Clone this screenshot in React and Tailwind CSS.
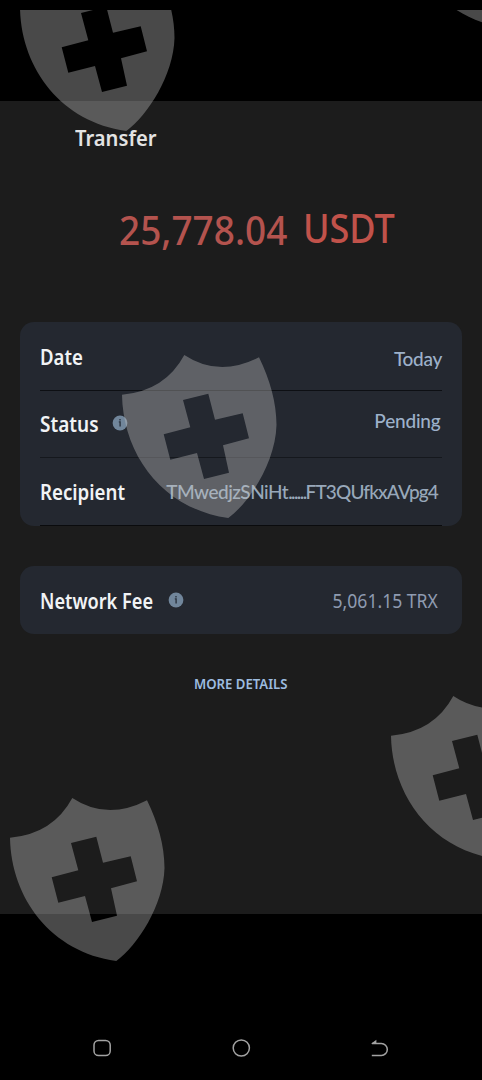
const SHIELD_BODY =
  "M10 57.7Q53 54 72.3 18Q107 41 147 20.3C158 43 164.5 66 164.5 88C163.5 125 138 165 116.3 181C51 172 11 118 10 57.7Z";
const SHIELD_CROSS =
  "M71 63L96.3 56.7L103 82.7L130.7 76.3L137 101.3L111 108.3L117 135.7L92 142L85 116L58.3 122.7L51.7 97.3L78.3 90.3Z";

function Shield({ className }) {
  return (
    <svg
      width="170"
      height="185"
      viewBox="0 0 170 185"
      className={`absolute ${className}`}
      fill="#bfbfbf"
      fillOpacity="0.38"
      fillRule="evenodd"
    >
      <path d={`${SHIELD_BODY}${SHIELD_CROSS}`} />
    </svg>
  );
}

function InfoIcon() {
  return (
    <svg width="16" height="16" viewBox="0 0 16 16" className="shrink-0">
      <circle cx="8" cy="8" r="7.4" fill="#71869b" />
      <path d="M6.8 6.9h1.3v4.6M8 4v1.5" stroke="#2b3440" strokeWidth="1.4" fill="none" />
    </svg>
  );
}

function Label({ children, className = "scale-x-[0.885]" }) {
  return (
    <span className={`origin-left whitespace-nowrap text-[21px] leading-7 font-semibold text-[#f1f3f5] ${className}`}>
      {children}
    </span>
  );
}

function Value({ children, className = "" }) {
  return (
    <span className={`ml-auto origin-right whitespace-nowrap leading-7 ${className}`}>
      {children}
    </span>
  );
}

export default function App() {
  return (
    <div className="relative h-[1080px] w-[482px] overflow-hidden bg-black font-['Noto_Sans',sans-serif]">
      <div className="h-[101px]" />

      <main className="flex h-[813px] flex-col bg-[#1c1c1c]">
        <h1 className="mt-[23px] ml-[75px] w-max origin-left scale-x-[0.96] text-[21px] leading-7 font-semibold text-[#e3e3e3]">
          Transfer
        </h1>

        <div className="mt-[50px] ml-[118.5px] flex h-14 text-[40px] leading-[56px] font-medium">
          <span className="w-[184px] origin-left scale-x-[0.925] whitespace-nowrap text-[#b4534e]">25,778.04</span>
          <span className="-mt-[2px] origin-left scale-x-[0.9] text-[#c1524a]">USDT</span>
        </div>

        <section className="mx-5 mt-16 h-[204px] rounded-[14px] bg-[#242830] px-5">
          <div className="flex h-[69px] border-b border-[#0d0f13] pt-[21px]">
            <Label>Date</Label>
            <Value className="mt-[2px] font-['Lato',sans-serif] text-[19px] font-medium tracking-[-0.3px] text-[#9db1ca]">
              Today
            </Value>
          </div>
          <div className="flex h-[67px] border-b border-[#15181d] pt-[19px]">
            <Label className="w-[72px] scale-x-[0.905]">Status</Label>
            <div className="mt-[5px]">
              <InfoIcon />
            </div>
            <Value className="-mt-[3px] mr-[1.5px] font-['Lato',sans-serif] text-[19px] font-medium tracking-[-0.2px] text-[#9db1ca]">
              Pending
            </Value>
          </div>
          <div className="flex h-[68px] border-b border-[#0a0b0d] pt-5">
            <Label className="scale-x-[0.89]">Recipient</Label>
            <Value className="mr-1 font-['Lato',sans-serif] text-[19px] font-medium text-[#98a8ba]">
              <span className="tracking-[-0.5px]">TMwedjzSNiHt</span>
              <span className="tracking-[-1.6px]">......</span>
              <span className="tracking-[-0.85px]">FT3QUfkxAVpg4</span>
            </Value>
          </div>
        </section>

        <section className="mx-5 mt-10 flex h-[68px] rounded-[14px] bg-[#242830] px-5 pt-[21px]">
          <Label className="w-[127.5px] scale-x-[0.865]">Network Fee</Label>
          <div className="mt-[5px]">
            <InfoIcon />
          </div>
          <Value className="mr-1 scale-x-[0.925] text-[19px] text-[#8f9bb0]">5,061.15 TRX</Value>
        </section>

        <button className="mx-auto mt-10 scale-x-[0.94] text-[14px] leading-5 font-semibold text-[#9dbce0]">
          MORE DETAILS
        </button>
      </main>

      <nav className="mt-[124px] flex h-5 items-center text-[#a3a3a3]">
        <svg width="20" height="20" viewBox="0 0 20 20" fill="none" stroke="currentColor" strokeWidth="1.5" className="ml-[92px]">
          <rect x="2" y="2.4" width="16.2" height="15.2" rx="4.6" />
        </svg>
        <svg width="20" height="20" viewBox="0 0 20 20" fill="none" stroke="currentColor" strokeWidth="1.5" className="ml-[119px]">
          <circle cx="10.3" cy="10" r="8.1" />
        </svg>
        <svg width="20" height="20" viewBox="0 0 20 20" fill="none" stroke="currentColor" strokeWidth="1.5" className="ml-[119px]">
          <path d="M2 5.4h9.3a6 6 0 0 1 0 12H1.8" />
          <path d="M1 5.8L6.4 1.8v4z" fill="currentColor" stroke="none" />
        </svg>
      </nav>

      {/* Shield watermark, cut off at the top edge */}
      <div className="pointer-events-none absolute inset-x-0 top-[10px] bottom-0 overflow-hidden">
        <Shield className="top-[-60.5px] left-[10px]" />
        <Shield className="top-[-163px] left-[390px]" />
        <Shield className="top-[326.5px] left-[112px]" />
        <Shield className="top-[667.5px] left-[381px]" />
        <Shield className="top-[770px] left-0" />
      </div>
    </div>
  );
}
